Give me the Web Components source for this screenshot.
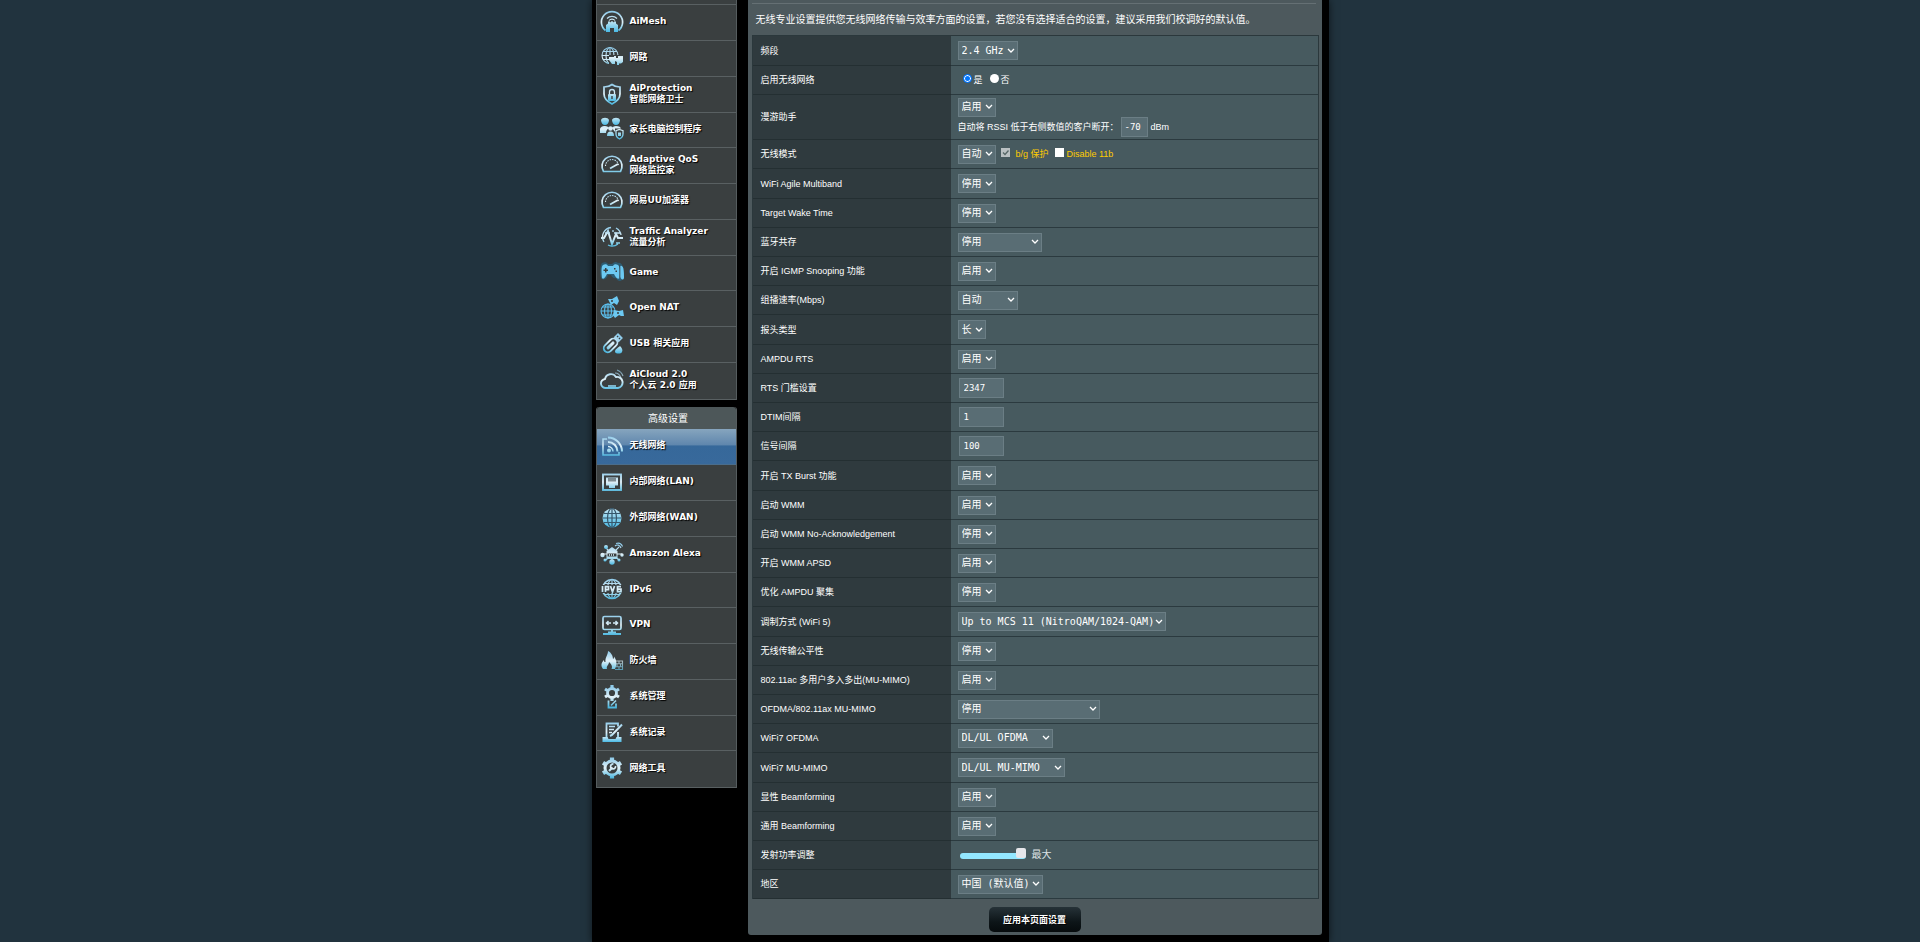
<!DOCTYPE html>
<html lang="zh-CN">
<head>
<meta charset="utf-8">
<title>无线网络 - 专业设置</title>
<style>
  html { background: #21333e; }
  body { margin: 0; color: #fff; font: 9px/12px "Liberation Sans", "Noto Sans CJK SC", sans-serif; }
</style>
</head>
<body>
<router-page>
  <side-menu slot="menu"></side-menu>
  <settings-panel>
    <span slot="intro">无线专业设置提供您无线网络传输与效率方面的设置，若您没有选择适合的设置，建议采用我们校调好的默认值。</span>
    <settings-table></settings-table>
    <apply-button slot="actions">应用本页面设置</apply-button>
  </settings-panel>
</router-page>

<script>
const define = (name, markup, setup) => {
  const template = document.createElement('template');
  template.innerHTML = markup;
  customElements.define(name, class extends HTMLElement {
    constructor() {
      super();
      this.attachShadow({ mode: 'open' }).append(template.content.cloneNode(true));
    }
    connectedCallback() {
      if (setup && !this.ready) { this.ready = true; setup(this, this.shadowRoot); }
    }
  });
};

/* 24 x 24 glyphs; class "f" fills with the gradient, "d" paints in the menu colour */
const ICONS = {
  mesh: '<path d="M5.500 20.500a10.600 10.600 0 1 1 13 0" stroke-width="1.700"/><path d="M7 8.500a7 7 0 0 1 10 0M9 10.500a4 4 0 0 1 6 0"/><path class="b" d="M6 22v-7l2-1.500v-2h2v1l2-1.500 2 1.500v-1h2v2l2 1.500v7h-4v-4h-4v4z"/>',
  network: '<circle cx="10" cy="9.500" r="8"/><ellipse cx="10" cy="9.500" rx="4" ry="8"/><path d="M10 1.500v16M2 9.500h16M3 5.500h14M3 13.500h14"/><path class="d" d="M9 9h15v11H9z"/><path class="f" d="M9 11h5v-1h2v2h2v-2h5v6l-2 1.500h-2v1.500h-2v-3l-2-1v3h-3l-3-4z"/>',
  shield: '<path d="M12 2.500c2.500 2 5 2.500 8 2.500v7c0 5-3 7.500-8 10-5-2.500-8-5-8-10V5c3 0 5.500-.5 8-2.500z" stroke-width="1.700"/><rect class="b" x="8" y="12" width="8" height="7" rx="1"/><path d="M9.500 12V10a2.500 2.500 0 0 1 5 0V12" stroke-width="1.300"/><path class="d" d="M11.300 14h1.400v3h-1.400z"/>',
  family: '<path class="b" d="M1 3c1-3 7-3 8 0 0 3-2 5-4 5S1 6 1 3zM12 3c1-3 7-3 8 0 0 3-2 5-4 5s-4-2-4-5z"/><path class="f" d="M0 16v-3c0-3 2-4 5-4 2 0 4 1 4 2-2 1-3 3-3 5zM12 11c0-1 2-2 4-2 3 0 5 1 5 3l-6 3z"/><circle class="f" cx="10.500" cy="11.500" r="2.300"/><path class="f" d="M7 19c0-3 1-4.500 3.500-4.500S14 16 14 19z"/><path class="d" d="M15 11.500h9V23h-9z"/><path d="M19.500 12.500l3.500 1.200v3.300c0 2.500-1.500 4-3.500 5-2-1-3.500-2.500-3.500-5v-3.300z" stroke-width="1.300"/><path class="f" d="M18 15.500h3v3.500h-3z"/>',
  gauge: '<path d="M3.500 18.500A10 10 0 1 1 20.500 18.500z" stroke-width="1.700"/><path d="M5.500 13a6.500 6.500 0 0 1 13 0" stroke-dasharray="1.500 1"/><path d="M10 15.500l8-4.500" stroke-width="1.900"/>',
  traffic: '<path d="M4 17A9.500 9.500 0 0 1 11 2.500M16 3a9.500 9.500 0 0 1 5 7M8 20a9.500 9.500 0 0 0 10-1M13 5v2M5 8h5M14 8h6M16 18h4" stroke-width="1.300"/><path d="M1 13h3l4-7 4 13 4-10 2 4h5" stroke-width="2"/>',
  game: '<path class="g" d="M2 3c2-1 5-1 6 1h4c2-2 4-3 6-1 4-1 6 4 6 14-2 5-6 5-8 1-2 1-4-1-5-3H8c-1 4-5 6-7 3C0 14 0 5 2 3z"/><path class="c" d="M3 5c2-1 4-1 5 1h5c1-2 3-2 5-1 2 1 2 8 1.500 13-2 2-4-1-5.500-4H7c-1.500 3-3.500 6-5 4C1.500 13 1 6 3 5z"/><path class="c" d="M20 6c3-1 4 2 4 12-1 3-3 1-4-1z"/><path class="d" d="M5 8h1.500v1.500H8V11H6.500v1.500H5V11H3.500V9.500H5zM14 8h1.500v1.500H14zM15.500 10.500H17V12h-1.500zM19.500 5h.8v13h-.8z"/>',
  nat: '<g class="s"><circle cx="8" cy="15" r="7"/><ellipse cx="8" cy="15" rx="3.500" ry="7"/><path d="M1 15h14M8 8v14M2.500 11h11M2.500 19h11"/></g><path class="c" d="M8 3l4 0 5-3 2 5-2 4-3-2-3 2zM14 14l5 1 4-1 1 6-3 0-2-1-4 3-2-3z"/><circle class="d" cx="12" cy="5" r="1"/><circle class="d" cx="18" cy="17" r="1"/>',
  usb: '<g transform="rotate(45 12 12)"><rect x="8" y="6" width="8" height="16" rx="4" stroke-width="1.800"/><rect class="f" x="10.500" y="9" width="3" height="10" rx="1.500"/><path class="f" d="M8.500 6V0h7v6z"/><path class="d" d="M10 2h1.300v1.500H10zM12.700 2H14v1.500h-1.300z"/></g><path class="b" d="M15 20c0-3 3-4 5-6 2 2 3 4 2 6s-6 2-7 0z"/>',
  cloud: '<path d="M6 20a4.500 4.500 0 0 1-1-9 6 6 0 0 1 11-2 5.500 5.500 0 0 1 2 11z" stroke-width="1.900"/><path d="M15 5c3 0 5 2 6 5M17 2c3 1 5 3 6 6" stroke-width="1.100" opacity=".7"/><path d="M8 18h8" stroke-width="2" opacity=".8"/>',
  wifi: '<path d="M7 5H3v16h16v-3" stroke-width="1.500"/><path d="M8 3.500a14 14 0 0 1 14 14M8 8a9.500 9.500 0 0 1 9.500 9.500" stroke-width="2"/><path d="M8 12.500a5 5 0 0 1 5 5" stroke-width="1.500"/><circle class="f" cx="9" cy="16.500" r="2"/>',
  lan: '<rect x="3" y="4.500" width="18" height="15.500" stroke-width="1.900"/><path class="f" d="M6 7.500h12v8h-3V18H9v-2.500H6z"/><path d="M9 8v3.500M11 8v3.500M13 8v3.500M15 8v3.500" style="stroke:#3a3f40"/>',
  globe: '<circle class="b" cx="12" cy="12" r="9.500"/><g style="stroke:#36576b" stroke-width="1.200"><ellipse cx="12" cy="12" rx="4.500" ry="9.500"/><path d="M12 2.500v19M2.500 12h19M4 7.500h16M4 16.500h16"/></g>',
  alexa: '<path d="M12 12L5 5M12 12l7-7M12 12H2M12 12h10M12 12v10M12 12l-6 6M12 12l7 6"/><circle class="b" cx="6" cy="5" r="2"/><circle class="f" cx="2.500" cy="13" r="2.200"/><circle class="f" cx="22" cy="13" r="1.700"/><circle class="b" cx="12" cy="20" r="2.700"/><circle class="b" cx="5" cy="18" r="1.500"/><circle class="b" cx="19" cy="18" r="1.500"/><path class="f" d="M6.500 9l5.500-4 5.500 4v8h-11z"/><path class="d" d="M7.500 11.500h9v3h-9z"/><path d="M9 13h6" stroke-width="1.500" stroke-dasharray="1 1"/><path d="M15 4c2-2 5-1 6 2M16 1.500c3-1 5.500.5 6.500 3"/>',
  ipv6: '<circle cx="12" cy="12" r="9.500" stroke-width="1.600"/><ellipse cx="12" cy="12" rx="4.500" ry="9.500"/><path d="M12 2.500v19M4 6.500h16M4 17.500h16"/><path class="d" d="M1 8h22v8H1z"/><path d="M2.500 9v6M5.500 15V9.600h3v3h-3M10.500 9l2 6 2-6M21 9.600h-3.500v5h3.500v-2.500h-3.500" stroke-width="1.700"/>',
  vpn: '<rect x="3" y="3.500" width="18" height="13" rx="1.500" stroke-width="1.700"/><path d="M6.500 10H11M13 10h4.500M8.500 8l-2 2 2 2M15.500 8l2 2-2 2" stroke-width="1.500"/><path d="M12 17v3M3 21h18M8 19.500h8" stroke-width="1.800"/>',
  fire: '<path class="f" d="M3 20c-3-4-1-7 1-9 0 2 .5 2 1.500 2C5 8 8 6 8 2c4 2 5 6 5 8 1-.5 1-1.500 1-2.500 3 4 3 8 1 12.500z"/><path class="d" d="M7 20c-1-3 2-4 2-7 2 2 4 4 2.500 7z"/><path d="M16 12h6.500v8.500H15M14 14.800h8.500M14 17.700h8.500M19 12v3M17 15v3M20.500 15v3M19 18v3" opacity=".7"/>',
  admin: '<circle cx="12" cy="8" r="4.500" stroke-width="2.800"/><path d="M12 0v3M12 13v3M5 4l2.500 1.500M16.500 10.500L19 12M19 4l-2.500 1.500M7.500 10.500L5 12" stroke-width="3.200"/><path d="M8.500 15.500V22.500h7.500v-4" stroke-width="1.800"/><path d="M11 20.500l5-5" stroke-width="1.600"/>',
  log: '<path d="M6.500 18V3.500H18v3M18 12v6" stroke-width="1.800"/><path d="M9 6.500h6M9 9.500h5M9 12.500h3" stroke-width="1.500"/><path class="b" d="M2.500 17h5l1 2h7l1-2h5v5h-19z"/><path d="M22 4.500L12 15l-2 1" stroke-width="2"/>',
  tools: '<circle cx="12" cy="12" r="7" stroke-width="3"/><path d="M12 1.500v3M12 19.500v3M3 6.800l2.500 1.500M18.500 15.700l2.500 1.500M21 6.800l-2.500 1.500M5.500 15.700L3 17.200" stroke-width="4.200"/><path d="M9 15l3.500-3.500" stroke-width="2.200"/><path d="M15.500 10a2.500 2.500 0 1 1-2-2" stroke-width="1.700"/>'
};

define('menu-item', `
<style>
  :host { display: block; box-sizing: border-box; height: 36px; border-bottom: 1px solid #596062; background: #3a3f40; }
  :host([active]) { background: linear-gradient(#86a5be, #5f86ad 46%, #36689a 48%, #38699b); border-bottom-color: #4a6d8c; }
  a { display: flex; align-items: center; gap: 6px; height: 100%; padding: 0 3px 2px; box-sizing: border-box;
      color: #fff; text-decoration: none; text-shadow: 1px 1px 1px #000;
      font: bold 9px/11px "DejaVu Sans", "Noto Sans CJK SC", sans-serif; }
  svg { flex: none; width: 24px; height: 24px; fill: none; stroke: url(#ice); stroke-width: 1.1; }
  svg .f { fill: url(#ice); stroke: none; }
  svg .b { fill: url(#sea); stroke: none; }
  svg .c { fill: #6cc9f2; stroke: none; }
  svg .g { fill: #1793d2; stroke: none; opacity: .35; }
  svg .s { stroke: #5cc0ee; }
  svg .d { fill: #3a3f40; stroke: none; }
  span { white-space: nowrap; }
</style>
<a href="#">
  <svg viewBox="0 0 24 24" aria-hidden="true">
    <defs>
      <linearGradient id="ice" gradientUnits="userSpaceOnUse" x1="0" y1="2" x2="0" y2="22">
        <stop offset="0" stop-color="#8fcbea"/><stop offset=".5" stop-color="#e2f1f8"/><stop offset="1" stop-color="#4db8e0"/>
      </linearGradient>
      <linearGradient id="sea" x1="0" y1="0" x2="0" y2="1">
        <stop offset="0" stop-color="#c4e6f4"/><stop offset="1" stop-color="#49b9e4"/>
      </linearGradient>
    </defs>
    <g></g>
  </svg>
  <span><slot></slot></span>
</a>`, (host, root) => { root.querySelector('g').innerHTML = ICONS[host.getAttribute('icon')]; });

define('side-menu', `
<style>
  :host { display: block; flex: none; width: 141px; }
  nav { display: block; border: solid #555c5e; border-width: 0 1px; }
  .previous { height: 4px; background: #3a3f40; border-bottom: 1px solid #596062; }
  menu-item:last-child { height: 37px; }
  .general menu-item:nth-of-type(4n) { height: 35px; }
  .advanced menu-item:nth-of-type(4n + 5) { height: 35px; }
  .advanced { margin-top: 7px; border-radius: 3px 3px 0 0; }
  h2 { margin: 0; padding-left: 4px; height: 22px; font: 10px/23px "DejaVu Sans", "Noto Sans CJK SC", sans-serif; text-align: center;
       background: #4d5759; border-radius: 3px 3px 0 0; }
</style>
<nav class="general">
  <div class="previous"></div>
  <menu-item icon="mesh">AiMesh</menu-item>
  <menu-item icon="network">网路</menu-item>
  <menu-item icon="shield">AiProtection<br>智能网络卫士</menu-item>
  <menu-item icon="family">家长电脑控制程序</menu-item>
  <menu-item icon="gauge">Adaptive QoS<br>网络监控家</menu-item>
  <menu-item icon="gauge">网易UU加速器</menu-item>
  <menu-item icon="traffic">Traffic Analyzer<br>流量分析</menu-item>
  <menu-item icon="game">Game</menu-item>
  <menu-item icon="nat">Open NAT</menu-item>
  <menu-item icon="usb">USB 相关应用</menu-item>
  <menu-item icon="cloud">AiCloud 2.0<br>个人云 2.0 应用</menu-item>
</nav>
<nav class="advanced">
  <h2>高级设置</h2>
  <menu-item icon="wifi" active>无线网络</menu-item>
  <menu-item icon="lan">内部网络(LAN)</menu-item>
  <menu-item icon="globe">外部网络(WAN)</menu-item>
  <menu-item icon="alexa">Amazon Alexa</menu-item>
  <menu-item icon="ipv6">IPv6</menu-item>
  <menu-item icon="vpn">VPN</menu-item>
  <menu-item icon="fire">防火墙</menu-item>
  <menu-item icon="admin">系统管理</menu-item>
  <menu-item icon="log">系统记录</menu-item>
  <menu-item icon="tools">网络工具</menu-item>
</nav>`);

/* kind, label, value, width of the control */
const ROWS = [
  ['select', '频段', '2.4 GHz', 60],
  ['radio', '启用无线网络'],
  ['roaming', '漫游助手', '启用', 38],
  ['mode', '无线模式', '自动', 38],
  ['select', 'WiFi Agile Multiband', '停用', 38],
  ['select', 'Target Wake Time', '停用', 38],
  ['select', '蓝牙共存', '停用', 84],
  ['select', '开启 IGMP Snooping 功能', '启用', 38],
  ['select', '组播速率(Mbps)', '自动', 60],
  ['select', '报头类型', '长', 28],
  ['select', 'AMPDU RTS', '启用', 38],
  ['text', 'RTS 门槛设置', '2347'],
  ['text', 'DTIM间隔', '1'],
  ['text', '信号间隔', '100'],
  ['select', '开启 TX Burst 功能', '启用', 38],
  ['select', '启动 WMM', '启用', 38],
  ['select', '启动 WMM No-Acknowledgement', '停用', 38],
  ['select', '开启 WMM APSD', '启用', 38],
  ['select', '优化 AMPDU 聚集', '停用', 38],
  ['select', '调制方式 (WiFi 5)', 'Up to MCS 11 (NitroQAM/1024-QAM)', 208],
  ['select', '无线传输公平性', '停用', 38],
  ['select', '802.11ac 多用户多入多出(MU-MIMO)', '启用', 38],
  ['select', 'OFDMA/802.11ax MU-MIMO', '停用', 142],
  ['select', 'WiFi7 OFDMA', 'DL/UL OFDMA', 95],
  ['select', 'WiFi7 MU-MIMO', 'DL/UL MU-MIMO', 107],
  ['select', '显性 Beamforming', '启用', 38],
  ['select', '通用 Beamforming', '启用', 38],
  ['range', '发射功率调整'],
  ['select', '地区', '中国 (默认值)', 85]
];
const select = (id, value, width) =>
  `<select id="${id}" style="width:${width}px"><option>${value}</option></select>`;
const CONTROLS = {
  select,
  text: (id, value) => `<input class="box" type="text" id="${id}" value="${value}">`,
  radio: id => `<div class="line radios"><input type="radio" name="radio" id="${id}" checked><label for="${id}">是</label>
    <input type="radio" name="radio" id="${id}-no"><label for="${id}-no">否</label></div>`,
  roaming: (id, value, width) => `${select(id, value, width)}
    <div class="line"><label for="rssi">自动将 RSSI 低于右侧数值的客户断开：</label>
    <input class="box small" type="text" id="rssi" value="-70"><span>dBm</span></div>`,
  mode: (id, value, width) => `<div class="line checks">${select(id, value, width)}
    <input type="checkbox" id="bg" checked disabled><label for="bg">b/g 保护</label>
    <input type="checkbox" id="no11b"><label for="no11b">Disable 11b</label></div>`,
  range: id => `<div class="line power"><input type="range" id="${id}" min="0" max="100" value="100"><output for="${id}">最大</output></div>`
};

define('settings-table', `
<style>
  :host { display: block; margin: 0 3px 0 4px; }
  table { width: 100%; table-layout: fixed; border-collapse: separate; border-spacing: 0; border: 1px solid #2b383c; border-bottom: 0; }
  col:first-child { width: 198px; }
  tr { height: 29px; }
  tr:first-child, tr:nth-child(5n) { height: 30px; }
  th, td { padding: 0; border-bottom: 1px solid #2b3a3f; text-align: left; vertical-align: middle; }
  th { background: #2f3a3e; padding-left: 8px; font-weight: normal; border-color: #242f32; }
  td { background: #475a5f; padding-left: 7px; }
  th label { display: block; }
  select, .box { box-sizing: border-box; margin: 0; color: #fff; border: 1px solid #6b7e85; border-radius: 0; }
  select { display: block; appearance: none; height: 19px; padding: 0 0 0 3px;
    font: 10px/14px "DejaVu Sans Mono", "Noto Sans CJK SC", monospace;
    background: #596d74 url("data:image/svg+xml,%3Csvg xmlns='http://www.w3.org/2000/svg' width='8' height='6'%3E%3Cpath d='M1 1l3 3 3-3' fill='none' stroke='white' stroke-width='1.3'/%3E%3C/svg%3E") no-repeat right 2px center; }
  .box { display: block; width: 45px; height: 20px; margin-left: 1px; padding: 0 4px; background: #596d74;
    font: 9px/14px "DejaVu Sans Mono", monospace; }
  .line { display: flex; align-items: center; }
  .line .small { width: 27px; margin: 0 3px 0 2px; padding: 0 3px; }
  input[type=radio], input[type=checkbox] { appearance: none; box-sizing: border-box; width: 9px; height: 9px; margin: 0 3px 3px 0; background: #fff; flex: none; }
  input[type=radio] { border-radius: 50%; }
  input[type=radio]:checked { background: #0075ff; border: 1px solid #0075ff; box-shadow: inset 0 0 0 1px #fff; }
  .radios { padding-left: 5px; }
  .radios input { margin-right: 2px; }
  .radios label { margin-right: 7px; }
  .checks label { color: #fc0; margin-right: 6px; }
  .checks select { margin-right: 5px; }
  .checks input:disabled { margin-right: 6px; background: #b9c0c2 url("data:image/svg+xml,%3Csvg xmlns='http://www.w3.org/2000/svg' width='9' height='9'%3E%3Cpath d='M2 4.500l2 2 3.500-4' fill='none' stroke='%23566' stroke-width='1.300'/%3E%3C/svg%3E"); }
  .power { gap: 6px; padding-left: 2px; font-size: 10px; color: #dde3e5; }
  input[type=range] { appearance: none; width: 66px; height: 11px; margin: 0 0 2px; background: none; }
  input[type=range]::-webkit-slider-runnable-track { height: 6px; margin-top: 3px; border-radius: 3px; background: #93e7ff; }
  input[type=range]::-webkit-slider-thumb { appearance: none; width: 10px; height: 10px; margin-top: -5px; border-radius: 2px; background: #e6e6ea; }
</style>
<table>
  <colgroup><col><col></colgroup>
  <tbody></tbody>
</table>`, (host, root) => {
  root.querySelector('tbody').innerHTML = ROWS.map(([kind, label, value, width], i) =>
    `<tr><th scope="row"><label for="f${i}">${label}</label></th><td>${CONTROLS[kind]('f' + i, value, width)}</td></tr>`).join('');
  root.querySelector('tr:nth-child(3)').style.height = '45px';
});

define('apply-button', `
<style>
  :host { display: inline-block; }
  button { display: block; min-width: 92px; height: 25px; padding: 0 12px; border: 0; border-radius: 5px; color: #fff;
    background: linear-gradient(#263238, #0d1518 60%, #060b0d);
    font: bold 9px/12px "Liberation Sans", "Noto Sans CJK SC", sans-serif; text-shadow: 1px 1px 0 #000; }
</style>
<button type="button"><slot></slot></button>`);

define('settings-panel', `
<style>
  :host { display: block; flex: 1; min-width: 0; background: #4d595d; border-radius: 0 0 3px 3px; }
  hr { margin: 0 6px 0 4px; height: 3px; border: 0; border-bottom: 1px solid #657074; }
  p { margin: 0; padding: 9px 8px 8px; min-height: 14px; font-size: 10px; line-height: 14px; }
  footer { display: flex; justify-content: center; padding: 8px 0 3px; }
</style>
<hr>
<p><slot name="intro"></slot></p>
<slot></slot>
<footer><slot name="actions"></slot></footer>`);

define('router-page', `
<style>
  :host { display: block; }
  main { display: flex; align-items: flex-start; gap: 11px; box-sizing: border-box; width: 100%; max-width: 737px; min-height: 100vh;
    margin: 0 auto; padding: 0 7px 0 4px; background: #000; box-shadow: 0 0 8px rgba(0, 0, 0, .6); }
</style>
<main><slot name="menu"></slot><slot></slot></main>`);
</script>
</body>
</html>
